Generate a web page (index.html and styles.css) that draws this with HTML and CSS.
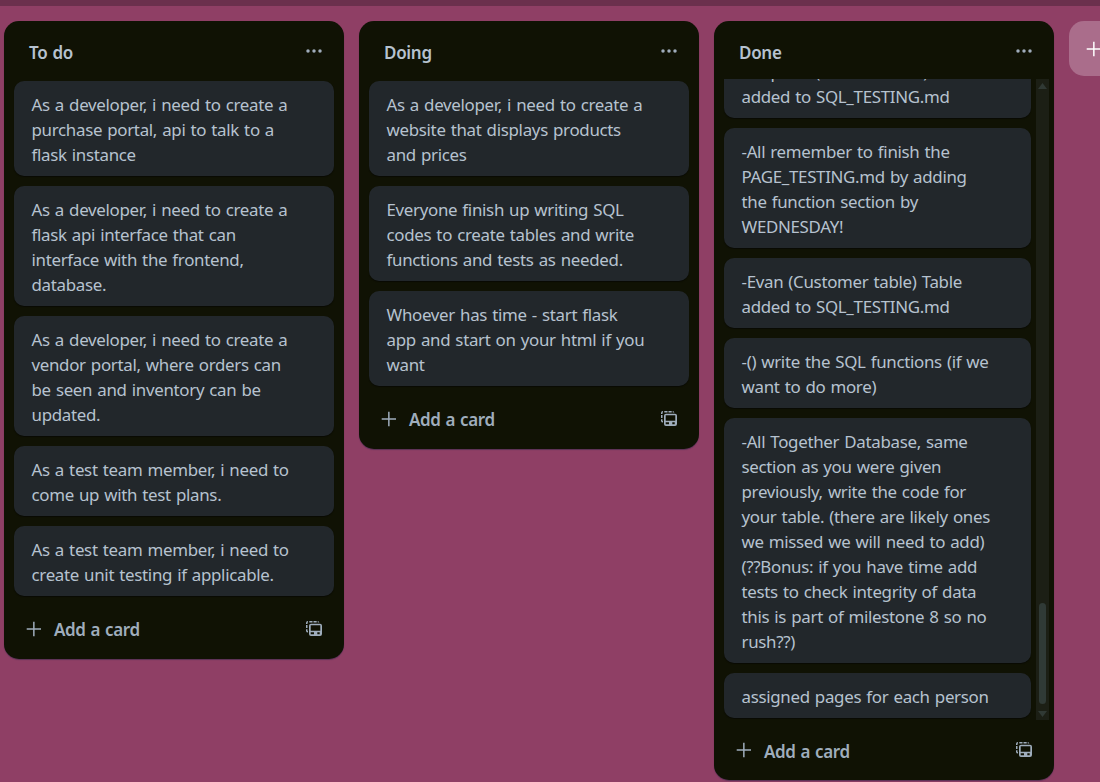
FILE: index.html
```html
<!DOCTYPE html>
<html lang="en">
<head>
<meta charset="utf-8">
<title>Board</title>
<link rel="stylesheet" href="styles.css">
</head>
<body>
<svg class="defs" width="0" height="0" aria-hidden="true">
  <symbol id="dots" viewBox="0 0 16 4"><circle cx="2" cy="2" r="1.75"/><circle cx="8" cy="2" r="1.75"/><circle cx="14" cy="2" r="1.75"/></symbol>
  <symbol id="plus" viewBox="0 0 16 16"><path d="M7.1 .8h1.5v6.4H15v1.500H8.600V15.200H7.100V8.700H.700V7.200h6.400z"/></symbol>
  <symbol id="template" viewBox="0 0 16 15">
    <path fill-rule="evenodd" d="M5 2.700h9a2 2 0 0 1 2 2V13a2 2 0 0 1-2 2H5a2 2 0 0 1-2-2V4.700a2 2 0 0 1 2-2zM4.700 4.300v5.400h9.600V4.300zM4.700 11.300v1.900h3.300v-1.900zM11.300 11.300v1.900h2.400v-1.900z"/>
    <path d="M0 2a2 2 0 0 1 2-2v1.500H1.500V3H0zM3.300 0h3.200v1.500H3.300zM7.500 0h3.200v1.500H7.500zM11.700 0a2 2 0 0 1 1.700 1.500h-1.700zM0 4h1.500v3H0zM0 8.200h1.500v1.900h.500v1.500a2 2 0 0 1-2-1.500z"/>
  </symbol>
</svg>
<div class="topbar"></div>
<main class="board">
  <section class="list">
    <header class="head"><h2>To do</h2><svg class="dots"><use href="#dots"/></svg></header>
    <div class="cards">
      <article class="card">As a developer, i need to create a
purchase portal, api to talk to a
flask instance</article>
      <article class="card">As a developer, i need to create a
flask api interface that can
interface with the frontend,
database.</article>
      <article class="card">As a developer, i need to create a
vendor portal, where orders can
be seen and inventory can be
updated.</article>
      <article class="card">As a test team member, i need to
come up with test plans.</article>
      <article class="card">As a test team member, i need to
create unit testing if applicable.</article>
    </div>
    <footer class="foot"><svg class="plus"><use href="#plus"/></svg><span class="add">Add a card</span><svg class="template"><use href="#template"/></svg></footer>
  </section>
  <section class="list">
    <header class="head"><h2>Doing</h2><svg class="dots"><use href="#dots"/></svg></header>
    <div class="cards">
      <article class="card">As a developer, i need to create a
website that displays products
and prices</article>
      <article class="card">Everyone finish up writing SQL
codes to create tables and write
functions and tests as needed.</article>
      <article class="card">Whoever has time - start flask
app and start on your html if you
want</article>
    </div>
    <footer class="foot"><svg class="plus"><use href="#plus"/></svg><span class="add">Add a card</span><svg class="template"><use href="#template"/></svg></footer>
  </section>
  <section class="list">
    <header class="head"><h2>Done</h2><svg class="dots"><use href="#dots"/></svg></header>
    <div class="scroller">
      <div class="cards scrolled">
        <article class="card">-Stephen (Product table) Table
added to SQL_TESTING.md</article>
        <article class="card">-All remember to finish the
PAGE_TESTING.md by adding
the function section by
WEDNESDAY!</article>
        <article class="card">-Evan (Customer table) Table
added to SQL_TESTING.md</article>
        <article class="card">-() write the SQL functions (if we
want to do more)</article>
        <article class="card">-All Together Database, same
section as you were given
previously, write the code for
your table. (there are likely ones
we missed we will need to add)
(??Bonus: if you have time add
tests to check integrity of data
this is part of milestone 8 so no
rush??)</article>
        <article class="card">assigned pages for each person</article>
      </div>
      <div class="scrollbar">
        <svg class="arrow" viewBox="0 0 9 6"><path d="M4.500 0 9 6H0z"/></svg>
        <div class="thumb"></div>
        <svg class="arrow" viewBox="0 0 9 6"><path d="M0 0h9L4.500 6z"/></svg>
      </div>
    </div>
    <footer class="foot low"><svg class="plus"><use href="#plus"/></svg><span class="add">Add a card</span><svg class="template"><use href="#template"/></svg></footer>
  </section>
  <div class="new-list"><svg class="plus"><use href="#plus"/></svg></div>
</main>
</body>
</html>
```
FILE: styles.css
```css
* { box-sizing: border-box; }
body {
  margin: 0;
  width: 1100px;
  height: 782px;
  overflow: hidden;
  background: #8f3f65;
  color: #b6c2cf;
  font-family: "Noto Sans", "Open Sans", sans-serif;
  font-size: 16.900px;
  line-height: 25px;
}
svg { display: block; flex: none; fill: currentColor; }
.defs { display: none; }
.topbar { height: 6px; background: #6b304d; }
.board { display: flex; align-items: flex-start; gap: 15px; padding: 15px 0 0 4px; }
.list {
  flex: none;
  width: 340px;
  border-radius: 15px;
  background: #101204;
  box-shadow: 0 1px 1px rgba(9, 30, 66, .4);
}
.head { display: flex; justify-content: space-between; height: 58px; padding: 19px 22px 0 25px; }
.head h2 { margin: 0; font-size: 17px; font-weight: 600; line-height: 25px; letter-spacing: -.3px; word-spacing: 1px; }
.dots { width: 16px; height: 4px; margin-top: 9px; color: #9fadbc; }
.cards { display: flex; flex-direction: column; gap: 10px; padding: 2px 10px; }
.card {
  flex: none;
  padding: 11px 0 9px 17.500px;
  border-radius: 10px;
  background: #22272b;
  box-shadow: 0 1px 1px rgba(3, 4, 4, .5);
  white-space: pre;
  letter-spacing: -.31px;
  word-spacing: 1px;
}
.foot { display: flex; align-items: flex-start; height: 61px; padding: 19px 22px 0; color: #9fadbc; }
.foot.low { height: 60px; }
.foot .plus { width: 16px; height: 16px; margin-top: 4px; }
.add { margin-left: 12px; font-size: 17px; font-weight: 600; letter-spacing: -.4px; word-spacing: 1px; }
.template { width: 16px; height: 15px; margin: 4px 0 0 auto; }
.foot.low .plus, .foot.low .template { margin-top: 3px; }
.scroller { display: flex; height: 641px; overflow: hidden; padding-right: 5px; }
.scrolled { flex: 1; justify-content: flex-end; padding-right: 5px; }
.scrollbar {
  display: flex;
  flex-direction: column;
  align-items: center;
  width: 13px;
  padding: 4px 0 3px;
  background: #1c1f15;
  color: #303934;
}
.arrow { width: 9px; height: 6px; }
.thumb { width: 7px; height: 101px; margin: auto 0 7px; border-radius: 4px; background: #303a36; }
.new-list {
  flex: 1;
  min-width: 0;
  height: 55px;
  overflow: hidden;
  padding: 20px 0 0 17px;
  border-radius: 15px 0 0 15px;
  background: #aa6d8b;
  color: #fff;
}
.new-list .plus { width: 16px; height: 16px; }
```
